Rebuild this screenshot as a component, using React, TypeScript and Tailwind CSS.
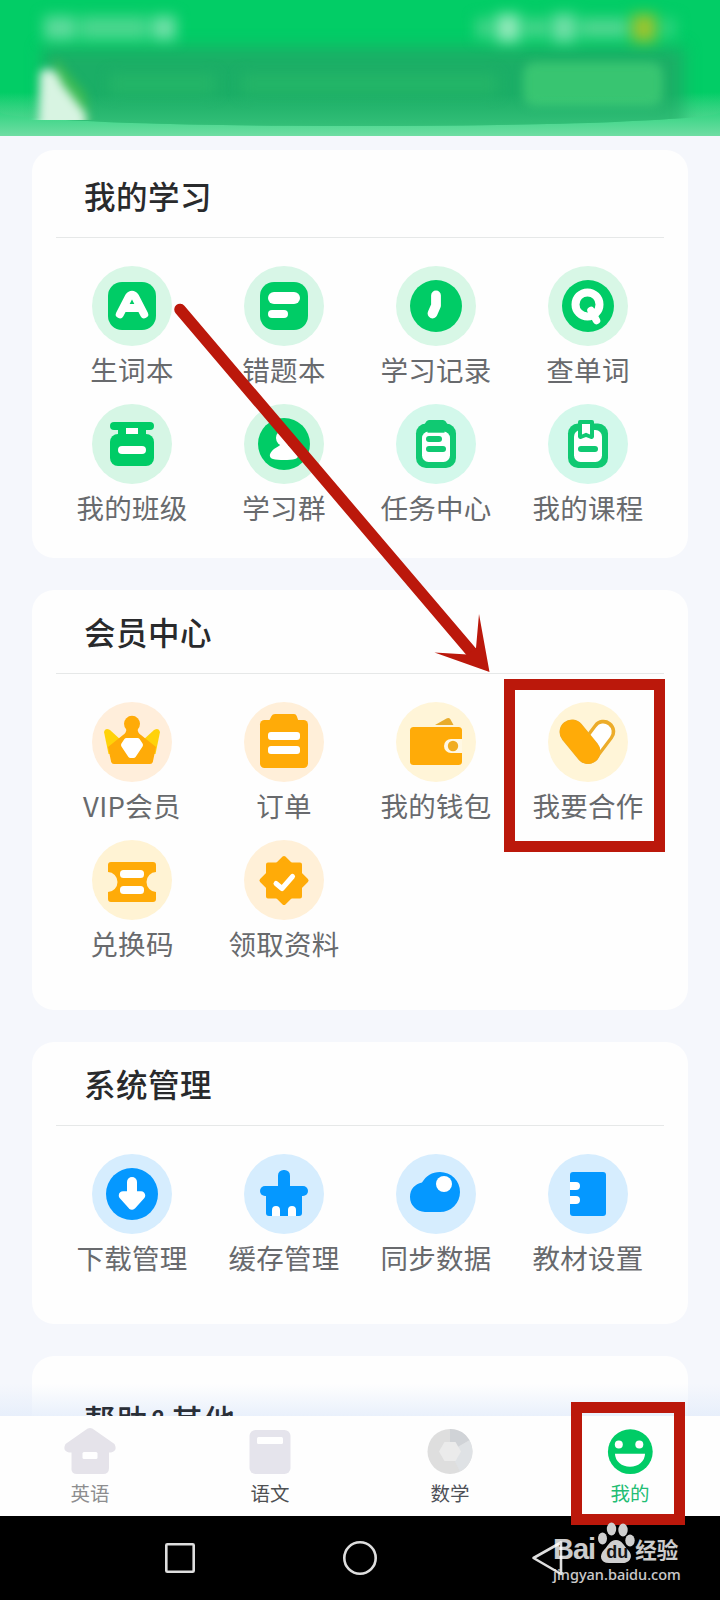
import type { ReactNode } from "react";
import clsx from "clsx";

const GREEN = "#00cc66";
const ORANGE = "#ffab08";
const BLUE = "#0598ff";

type Item = { label: string; tint: string; icon: ReactNode };

const studyItems: Item[] = [
  {
    label: "生词本",
    tint: "bg-[#d8f7e6]",
    icon: (
      <>
        <rect x="16" y="16" width="48" height="48" rx="14" fill={GREEN} />
        <path
          d="M27.8 48.3 36.8 30.8Q40 26.5 43.2 30.8L52.2 48.3"
          fill="none"
          stroke="#fff"
          strokeWidth="8"
          strokeLinecap="round"
        />
        <path d="M33 42H47" stroke="#fff" strokeWidth="8" />
      </>
    ),
  },
  {
    label: "错题本",
    tint: "bg-[#d8f6e7]",
    icon: (
      <>
        <rect x="16" y="16" width="48" height="48" rx="14" fill={GREEN} />
        <rect x="24" y="26" width="32" height="12" rx="6" fill="#fff" />
        <rect x="24" y="44" width="20" height="8" rx="4" fill="#fff" />
      </>
    ),
  },
  {
    label: "学习记录",
    tint: "bg-[#d8f7e6]",
    icon: (
      <>
        <circle cx="40" cy="40" r="26" fill={GREEN} />
        <path
          d="M40 29.5V39.5L36.5 47.5"
          fill="none"
          stroke="#fff"
          strokeWidth="9.8"
          strokeLinecap="round"
          strokeLinejoin="round"
        />
      </>
    ),
  },
  {
    label: "查单词",
    tint: "bg-[#d8f7e6]",
    icon: (
      <>
        <circle cx="40" cy="40" r="26" fill={GREEN} />
        <circle cx="39.5" cy="38.4" r="12" fill="none" stroke="#fff" strokeWidth="8" />
        <path d="M43 44.5 48.5 54.5" stroke="#fff" strokeWidth="7.5" strokeLinecap="round" />
      </>
    ),
  },
  {
    label: "我的班级",
    tint: "bg-[#d6f6e5]",
    icon: (
      <>
        <rect x="18" y="18" width="44" height="8" rx="4" fill={GREEN} />
        <path d="M26 25H54V32H26Z" fill={GREEN} />
        <rect x="18" y="30" width="44" height="32" rx="8" fill={GREEN} />
        <path d="M34 24H46V30H34Z" fill="#fff" />
        <rect x="26" y="42" width="28" height="8" rx="4" fill="#fff" />
      </>
    ),
  },
  {
    label: "学习群",
    tint: "bg-[#d6f6e5]",
    icon: (
      <>
        <circle cx="40" cy="40" r="26" fill={GREEN} />
        <circle cx="40" cy="34" r="8" fill="#fff" />
        <path
          d="M29 55C25 54 25 50 28 47C31 43.5 35 43 37 40H43C45 43 49 43.500 52 47C55 50 55 54 51 55C46 56.300 34 56.300 29 55Z"
          fill="#fff"
        />
      </>
    ),
  },
  {
    label: "任务中心",
    tint: "bg-[#d3f8eb]",
    icon: (
      <>
        <rect x="20" y="19.5" width="40" height="44.5" rx="10" fill="#10c972" />
        <path d="M28 22Q30 16 33 16H47Q50 16 52 22Z" fill="#10c972" />
        <rect x="26" y="27.5" width="28" height="30.5" rx="6.5" fill="#fff" />
        <path d="M31.5 27H48.5V28.7H31.5Z" fill="#10c972" />
        <rect x="30" y="32" width="16" height="6" rx="3" fill="#10c972" />
        <rect x="30" y="42" width="20" height="6" rx="3" fill="#10c972" />
      </>
    ),
  },
  {
    label: "我的课程",
    tint: "bg-[#d3f8eb]",
    icon: (
      <>
        <rect x="20" y="19.5" width="40" height="44.5" rx="10" fill="#10c972" />
        <rect x="26" y="26" width="28" height="32" rx="6.5" fill="#fff" />
        <path
          d="M32 16H44Q46 16 46 18V33Q45 36 42 34.5L38 33 34 34.5Q31 36 30 33V18Q30 16 32 16Z"
          fill="#10c972"
        />
        <path d="M34 20H42V30.5L38 28.7 34 30.5Z" fill="#fff" />
        <rect x="30" y="42" width="20" height="6" rx="3" fill="#10c972" />
      </>
    ),
  },
];

const memberItems: Item[] = [
  {
    label: "VIP会员",
    tint: "bg-[#ffeedb]",
    icon: (
      <>
        <path d="M12 30Q13 25.5 18 28L30 39 20 52H16.5Z" fill="#ffd20a" />
        <path d="M68 30Q67 25.5 62 28L50 39 60 52H63.5Z" fill="#ffd20a" />
        <circle cx="40" cy="21.8" r="8" fill={ORANGE} />
        <path
          d="M34.5 27H45.5Q46 31.5 49 33L64 45 60.8 60Q60.3 62 58 62H22Q19.7 62 19.2 60L16 45 31 33Q34 31.5 34.5 27Z"
          fill={ORANGE}
        />
        <path
          d="M34.5 38.500H45.5L48.5 43 41.500 53.500H38.500L31.500 43Z"
          fill="#fff"
          stroke="#fff"
          strokeWidth="5"
          strokeLinejoin="round"
        />
      </>
    ),
  },
  {
    label: "订单",
    tint: "bg-[#ffefd9]",
    icon: (
      <>
        <path d="M25 19 27.5 14Q28.5 12 31 12H50Q52 12 52.7 14L54.5 19Z" fill={ORANGE} />
        <rect x="16" y="18" width="48" height="48" rx="4.5" fill={ORANGE} />
        <rect x="24" y="30" width="32" height="8" rx="3" fill="#fff" />
        <rect x="24" y="44" width="32" height="8" rx="3" fill="#fff" />
      </>
    ),
  },
  {
    label: "我的钱包",
    tint: "bg-[#fff5d8]",
    icon: (
      <>
        <path d="M39 23 50.5 16.5Q53 15.3 54.5 17.5L57.5 23Z" fill="#e8ac2c" />
        <rect x="14" y="25" width="52" height="38" rx="3.5" fill={ORANGE} />
        <path d="M66 37H55A7 7 0 0 0 55 51H66Z" fill="#fff8e4" />
        <circle cx="57" cy="44" r="5.2" fill="#f0ac20" />
      </>
    ),
  },
  {
    label: "我要合作",
    tint: "bg-[#fff5d8]",
    icon: (
      <>
        <g fill="none" strokeLinecap="round">
          <path d="M55.5 29.5 40 50" stroke="#ecac2a" strokeWidth="23.500" />
          <path d="M55.2 30 42 47.500" stroke="#fff" strokeWidth="17" />
          <path d="M24 30 40 49.500" stroke="#ecac2a" strokeWidth="25" />
          <path d="M24 30 40 49.500" stroke={ORANGE} strokeWidth="24" />
        </g>
      </>
    ),
  },
  {
    label: "兑换码",
    tint: "bg-[#fff3d4]",
    icon: (
      <>
        <path
          d="M19 22H61Q64 22 64 25V32A9.5 10 0 0 0 64 52V59Q64 62 61 62H19Q16 62 16 59V52A9.5 10 0 0 0 16 32V25Q16 22 19 22Z"
          fill={ORANGE}
        />
        <rect x="28" y="30" width="24" height="8" rx="3.5" fill="#fff" />
        <rect x="28" y="46" width="24" height="8" rx="3.5" fill="#fff" />
      </>
    ),
  },
  {
    label: "领取资料",
    tint: "bg-[#fff0d8]",
    icon: (
      <>
        <g fill={ORANGE} stroke={ORANGE} strokeWidth="4" strokeLinejoin="round">
          <path d="M24 24.500H56V56.500H24Z" />
          <path d="M40 18 62.500 40.5 40 63 17.500 40.5Z" />
        </g>
        <path
          d="M32 43.5 38 48.5 48.5 36.5"
          fill="none"
          stroke="#fff"
          strokeWidth="5"
          strokeLinecap="round"
          strokeLinejoin="round"
        />
      </>
    ),
  },
];

const systemItems: Item[] = [
  {
    label: "下载管理",
    tint: "bg-[#d6edfe]",
    icon: (
      <>
        <circle cx="40" cy="40" r="26" fill={BLUE} />
        <path d="M40 28V42" stroke="#fff" strokeWidth="10" strokeLinecap="round" />
        <path
          d="M31 41.5H49L40 51.5Z"
          fill="#fff"
          stroke="#fff"
          strokeWidth="8.5"
          strokeLinejoin="round"
        />
      </>
    ),
  },
  {
    label: "缓存管理",
    tint: "bg-[#d6edfe]",
    icon: (
      <>
        <rect x="34" y="16" width="12" height="24" rx="5.5" fill={BLUE} />
        <rect x="16" y="32" width="48" height="10" rx="5" fill={BLUE} />
        <path d="M22 38H58V59Q58 62 55 62H25Q22 62 22 59Z" fill={BLUE} />
        <path d="M28 62V56A4 4 0 0 1 36 56V62ZM44 62V56A4 4 0 0 1 52 56V62Z" fill="#fff" />
      </>
    ),
  },
  {
    label: "同步数据",
    tint: "bg-[#d6edfe]",
    icon: (
      <>
        <path
          d="M29 58A15 15 0 0 1 14 43C14 35 19 30 26 28.5C30 22 36 18 44 18A20 20 0 0 1 44 58Z"
          fill={BLUE}
        />
        <circle cx="48" cy="30" r="8" fill="#fff" />
      </>
    ),
  },
  {
    label: "教材设置",
    tint: "bg-[#d6edfe]",
    icon: (
      <>
        <rect x="22" y="18" width="36" height="44" rx="3" fill={BLUE} />
        <path
          d="M22 28H28A4 4 0 0 1 28 36H22ZM22 42H28A4 4 0 0 1 28 50H22Z"
          fill="#fff"
        />
      </>
    ),
  },
];

const tabs = [
  {
    label: "英语",
    color: "text-[#8d8d8f]",
    icon: (
      <g fill="#e5e3ea">
        <path d="M21.500 2Q26 -2 30.500 2L50.500 16Q54 23 47 24.500H45V40Q45 46 39 46H13Q7 46 7.500 40V24.500H5Q-2 23 1.500 16Z" />
        <rect x="18.500" y="24" width="15" height="7" rx="1.500" fill="#fff" />
      </g>
    ),
  },
  {
    label: "语文",
    color: "text-[#4e5052]",
    icon: (
      <>
        <rect x="5.500" y="2" width="41" height="44" rx="6" fill="#e5e4ec" />
        <rect x="13" y="9" width="26" height="7" rx="1.500" fill="#fff" />
      </>
    ),
  },
  {
    label: "数学",
    color: "text-[#4e5158]",
    icon: (
      <>
        <circle cx="26" cy="23.500" r="22.500" fill="#dedede" />
        <path d="M26 23.500V1A22.500 22.500 0 0 1 45.500 12.300Z" fill="#d0d3d7" />
        <path d="M26 23.500 45.500 12.300A22.500 22.500 0 0 1 36 43.600Z" fill="#dfe2e5" />
        <path d="M20.500 14H31.500L37 23.500 31.500 33H20.500L15 23.500Z" fill="#ebebeb" />
      </>
    ),
  },
  {
    label: "我的",
    color: "text-[#22bd74]",
    icon: (
      <>
        <circle cx="26.300" cy="23.700" r="22.400" fill={GREEN} />
        <circle cx="14.800" cy="16.500" r="4" fill="#fff" />
        <circle cx="35.300" cy="16.500" r="4" fill="#fff" />
        <path d="M11 25.800H41A15 13 0 0 1 11 25.800Z" fill="#fff" />
      </>
    ),
  },
];

function Card({
  title,
  items,
  className,
  headClassName = "h-[83px] pb-px",
}: {
  title: string;
  items: Item[];
  className: string;
  headClassName?: string;
}) {
  return (
    <section className={clsx("shrink-0 rounded-[22px] bg-[#fefefe] px-6", className)}>
      <div className={clsx("flex items-center pl-7", headClassName)}>
        <h2 className="text-[31.500px] leading-10 font-medium tracking-[0.5px] text-[#292a2c]">
          {title}
        </h2>
      </div>
      <div className="h-px bg-[#e6e8e8]" />
      <div className="grid grid-cols-4 gap-y-[18px] pt-7">
        {items.map((item) => (
          <div key={item.label} className="flex flex-col items-center">
            <div className={clsx("size-20 rounded-full", item.tint)}>
              <svg viewBox="0 0 80 80" className="size-20">
                {item.icon}
              </svg>
            </div>
            <span className="mt-2 mb-[2px] text-[27.500px] leading-[30px] tracking-[0.3px] whitespace-nowrap text-[#686a6d]">
              {item.label}
            </span>
          </div>
        ))}
      </div>
    </section>
  );
}

function Header() {
  return (
    <header className="relative h-[136px] shrink-0 overflow-hidden bg-[#02cd66]">
      <div className="absolute inset-x-0 bottom-0 h-11 bg-gradient-to-b from-[#02cd66]/0 to-[#6fdda3]" />

      {/* promo banner with a curved lower edge */}
      <div className="absolute inset-x-0 top-0 h-[126px] overflow-hidden rounded-b-[50%_14px]">
        <div className="absolute top-[47px] left-[42px] h-[90px] w-[642px] bg-[#1bae66] blur-[8px]" />
        <div className="absolute top-[74px] left-[110px] h-5 w-[105px] bg-[#24b567] blur-[7px]" />
        <div className="absolute top-[74px] left-[242px] h-5 w-[255px] bg-[#24b567] blur-[7px]" />
        <div className="absolute top-[62px] left-[523px] h-[44px] w-[140px] rounded-xl bg-[#38c571] blur-[5px]" />
        <div className="absolute inset-x-0 bottom-0 h-8 bg-gradient-to-b from-[#4fd28c]/0 to-[#4fd28c]/45" />
      </div>

      <div className="absolute top-[54px] left-[24px] h-[66px] w-20 overflow-hidden">
        <svg viewBox="0 0 80 80" className="h-20 w-20 blur-[5px]">
          <path d="M30 2 62 40 66 80H44Z" fill="#3cbb55" />
          <path d="M16 18Q30 8 38 30L62 60V80H14Z" fill="#d8f4e2" />
        </svg>
      </div>

      {/* frosted status bar */}
      <div className="relative flex h-14 items-center justify-between px-11">
        <div className="flex gap-1 blur-[7px]">
          <span className="h-6 w-8 bg-[#5cda9b]" />
          <span className="h-6 w-[68px] bg-[#4ad68e]" />
          <span className="h-6 w-6 bg-[#6fdfa7]" />
        </div>
        <div className="flex items-center gap-1 blur-[7px]">
          <span className="h-5 w-4 bg-[#45d48a]" />
          <span className="h-7 w-6 bg-[#8fe8b9]" />
          <span className="h-5 w-6 bg-[#45d48a]" />
          <span className="h-7 w-6 bg-[#6fdea6]" />
          <span className="h-5 w-12 bg-[#50d690]" />
          <span className="h-7 w-6 bg-[#9cc42f]" />
          <span className="h-5 w-4 bg-[#2dd27c]" />
        </div>
      </div>
    </header>
  );
}

function Watermark() {
  return (
    <div className="absolute top-[1522px] left-[553px] text-white/80">
      <div className="flex h-[42px] items-end">
        <span className="font-['Liberation_Sans'] text-[29px] leading-[29px] font-bold tracking-[-1px]">
          Bai
        </span>
        <div className="relative ml-[3px] h-[42px] w-[37px]">
          <svg viewBox="0 0 37 42" className="h-[42px] w-[37px]" fill="#cfcfcf">
            <ellipse cx="4.500" cy="16.500" rx="4.500" ry="6" />
            <ellipse cx="13.500" cy="7" rx="4.700" ry="6.500" />
            <ellipse cx="25" cy="8" rx="4.700" ry="6.500" />
            <ellipse cx="32" cy="18.500" rx="4.700" ry="6" />
            <path d="M18 18C24 18 26 24 30 28C36 34 32 41 25 41H11C2 41 1 33 6 28C10 24 12 18 18 18Z" />
          </svg>
          <span className="absolute top-[20px] left-[8px] font-['Liberation_Sans'] text-[18px] leading-[20px] font-bold text-[#161616]">
            du
          </span>
        </div>
        <span className="text-[21.500px] leading-[30px] font-bold">经验</span>
      </div>
      <div className="mt-[-1px] font-['Noto_Sans'] text-[14.500px] leading-[22px] font-medium whitespace-nowrap">
        jingyan.baidu.com
      </div>
    </div>
  );
}

export default function App() {
  return (
    <div className="relative flex h-[1600px] w-[720px] flex-col overflow-hidden bg-[#f5f7fc] font-['Noto_Sans_CJK_SC',sans-serif]">
      <Header />

      <main className="relative flex h-[1280px] shrink-0 flex-col gap-8 overflow-hidden px-8 pt-[14px]">
        <Card
          title="我的学习"
          items={studyItems}
          className="h-[408px]"
          headClassName="h-[87px] pt-[3px]"
        />
        <Card title="会员中心" items={memberItems} className="h-[420px]" />
        <Card title="系统管理" items={systemItems} className="h-[282px]" />
        <section className="h-[120px] shrink-0 rounded-t-[22px] bg-[#fefefe] px-[52px] pt-[43px]">
          <h2 className="relative z-10 text-[31.500px] leading-10 font-medium tracking-[0.7px] text-[#2a2f38]">
            帮助&其他
          </h2>
        </section>
        <div className="absolute inset-x-0 bottom-0 h-8 bg-gradient-to-b from-[#e4edfb]/0 to-[#e4edfb]/80" />
      </main>

      <nav className="grid h-[100px] shrink-0 grid-cols-4 bg-[#fefefe] pt-3">
        {tabs.map((tab) => (
          <div key={tab.label} className="flex flex-col items-center">
            <svg viewBox="0 0 52 48" className="h-12 w-[52px]">
              {tab.icon}
            </svg>
            <span className={clsx("mt-[5px] text-[19.500px] leading-6", tab.color)}>
              {tab.label}
            </span>
          </div>
        ))}
      </nav>

      <div className="flex h-[84px] shrink-0 items-center justify-around bg-black px-[90px]">
        <svg
          viewBox="0 0 36 36"
          className="size-9"
          fill="none"
          stroke="#dedede"
          strokeWidth="2.600"
        >
          <rect x="4.300" y="4.300" width="27.400" height="27.400" rx="1" />
        </svg>
        <svg
          viewBox="0 0 36 36"
          className="size-9"
          fill="none"
          stroke="#dedede"
          strokeWidth="2.600"
        >
          <circle cx="18" cy="18" r="15.700" />
        </svg>
        <svg
          viewBox="0 0 36 36"
          className="size-9 overflow-visible"
          fill="none"
          stroke="#dedede"
          strokeWidth="2.600"
          strokeLinejoin="round"
        >
          <path d="M11.500 18 39 2.500V34Z" />
        </svg>
      </div>

      {/* tutorial markers */}
      <svg
        viewBox="0 0 720 1600"
        className="pointer-events-none absolute top-0 left-0 h-[1600px] w-[720px]"
      >
        <path d="M180 309.500 474 655" stroke="#bb180b" strokeWidth="11.500" strokeLinecap="round" />
        <path d="M479 614 489.500 672 434.500 652.500 467.500 654.500 476 648Z" fill="#bb180b" />
      </svg>
      <div className="absolute top-[679px] left-[504px] h-[173px] w-[161px] border-[11px] border-[#bb180b]" />
      <div className="absolute top-[1402px] left-[571px] h-[123px] w-[114px] border-[11px] border-[#bb180b]" />

      <Watermark />
    </div>
  );
}
